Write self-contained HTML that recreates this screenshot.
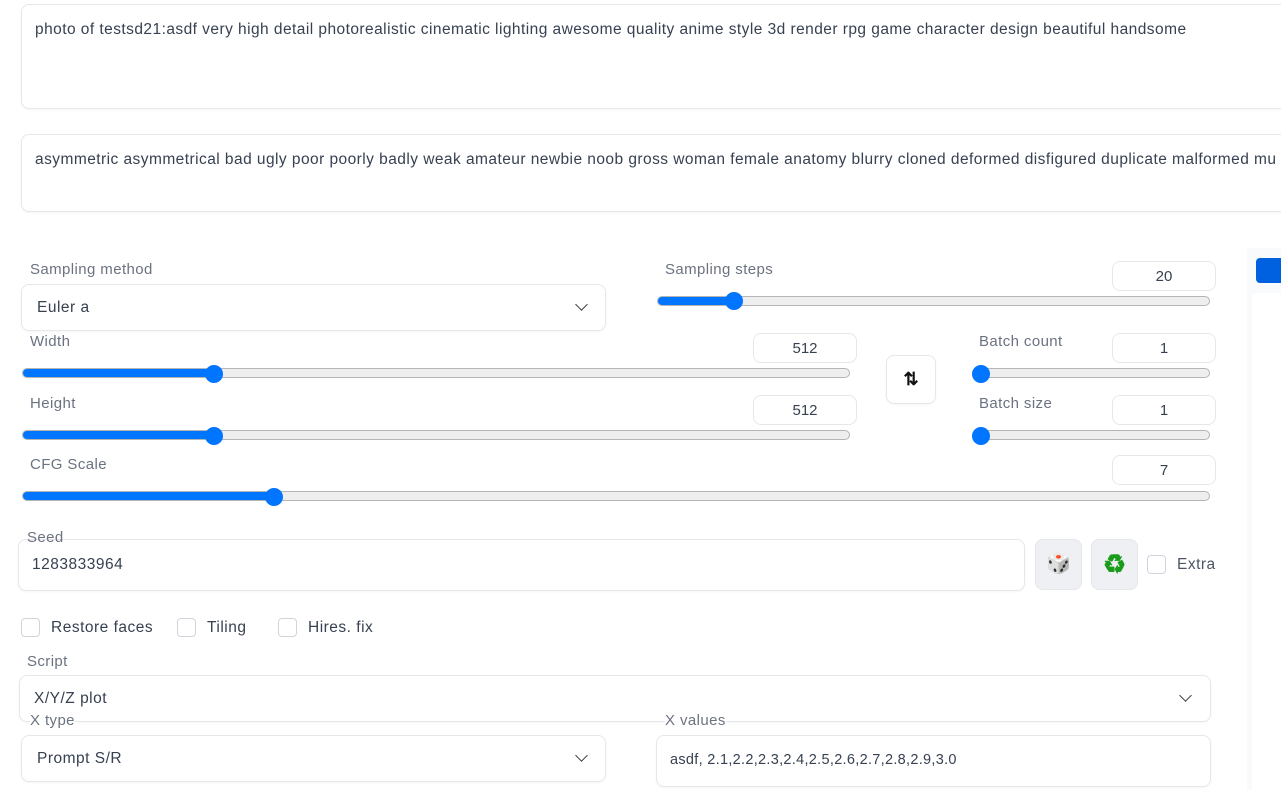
<!DOCTYPE html>
<html><head><style>
body{margin:0;width:1281px;height:789px;overflow:hidden;background:#fff;font-family:"Liberation Sans",sans-serif;position:relative;color:#374151}
.a{position:absolute}
.box{position:absolute;border:1px solid #e5e7eb;border-radius:8px;background:#fff;box-shadow:0 1px 2px rgba(0,0,0,.04)}
.lbl{position:absolute;font-size:15px;letter-spacing:0.4px;color:#6b7280;z-index:2;white-space:nowrap}
.num{position:absolute;border:1px solid #e5e7eb;border-radius:8px;width:102px;height:28px;text-align:center;line-height:30px;font-size:15px;color:#374151}
.trk{position:absolute;height:8px;border:1px solid #b5b5b5;border-radius:6px;background:#eee;overflow:hidden}
.trk i{position:absolute;left:0;top:0;bottom:0;background:#0075ff}
.th{position:absolute;width:18px;height:18px;border-radius:50%;background:#0075ff}
.cb{position:absolute;width:17px;height:17px;border:1px solid #d1d5db;border-radius:4px;background:#fff}
.t{position:absolute;font-size:15.5px;letter-spacing:0.5px;color:#374151;white-space:nowrap;z-index:2}
.chev{position:absolute;width:8px;height:8px;border-right:1.6px solid #444;border-bottom:1.6px solid #444;transform:rotate(45deg)}
</style></head><body>
<div class="box" style="left:21px;top:4px;width:1280px;height:103px"></div>
<div class="t" style="left:35px;top:21px;letter-spacing:0.45px">photo of testsd21:asdf very high detail photorealistic cinematic lighting awesome quality anime style 3d render rpg game character design beautiful handsome</div>
<div class="box" style="left:21px;top:134px;width:1280px;height:76px"></div>
<div class="t" style="left:35px;top:151px;letter-spacing:0.45px">asymmetric asymmetrical bad ugly poor poorly badly weak amateur newbie noob gross woman female anatomy blurry cloned deformed disfigured duplicate malformed mu</div>

<div class="a" style="left:1247px;top:248px;width:40px;height:541px;background:#f9fafb"></div>
<div class="a" style="left:1256px;top:258px;width:30px;height:25px;background:#0061e0;border-radius:4px"></div>
<div class="a" style="left:1252px;top:293px;width:40px;height:496px;background:#fff"></div>

<div class="lbl" style="left:30px;top:261px">Sampling method</div>
<div class="box" style="left:21px;top:284px;width:583px;height:45px"></div>
<div class="t" style="left:37px;top:299px">Euler a</div>
<div class="chev" style="left:577px;top:300px"></div>

<div class="lbl" style="left:665px;top:261px">Sampling steps</div>
<div class="num" style="left:1112px;top:261px">20</div>
<div class="trk" style="left:657px;top:296px;width:551px"><i style="width:78px"></i></div>
<div class="th" style="left:725px;top:292px"></div>

<div class="lbl" style="left:30px;top:333px">Width</div>
<div class="num" style="left:753px;top:333px">512</div>
<div class="trk" style="left:22px;top:368px;width:826px"><i style="width:192px"></i></div>
<div class="th" style="left:205px;top:365px"></div>

<div class="box" style="left:886px;top:355px;width:48px;height:47px;text-align:center;line-height:47px;font-size:18px;font-weight:bold;color:#111">⇅</div>

<div class="lbl" style="left:979px;top:333px">Batch count</div>
<div class="num" style="left:1112px;top:333px">1</div>
<div class="trk" style="left:972px;top:368px;width:236px"></div>
<div class="th" style="left:972px;top:365px"></div>

<div class="lbl" style="left:30px;top:395px">Height</div>
<div class="num" style="left:753px;top:395px">512</div>
<div class="trk" style="left:22px;top:430px;width:826px"><i style="width:192px"></i></div>
<div class="th" style="left:205px;top:427px"></div>

<div class="lbl" style="left:979px;top:395px">Batch size</div>
<div class="num" style="left:1112px;top:395px">1</div>
<div class="trk" style="left:972px;top:430px;width:236px"></div>
<div class="th" style="left:972px;top:427px"></div>

<div class="lbl" style="left:30px;top:456px">CFG Scale</div>
<div class="num" style="left:1112px;top:455px">7</div>
<div class="trk" style="left:22px;top:491px;width:1186px"><i style="width:252px"></i></div>
<div class="th" style="left:265px;top:488px"></div>

<div class="box" style="left:18px;top:539px;width:1005px;height:50px"></div>
<div class="lbl" style="left:27px;top:529px">Seed</div>
<div class="t" style="left:32px;top:556px">1283833964</div>
<div class="a" style="left:1035px;top:539px;width:45px;height:49px;background:#eef0f3;border-radius:8px;border:1px solid #e5e7eb;text-align:center;line-height:49px;font-size:20px">🎲</div>
<div class="a" style="left:1091px;top:539px;width:45px;height:49px;background:#eef0f3;border-radius:8px;border:1px solid #e5e7eb;text-align:center;line-height:49px;font-size:26px;font-weight:bold;color:#1a9c1a">♻</div>
<div class="cb" style="left:1147px;top:555px"></div>
<div class="t" style="left:1177px;top:556px;color:#4b5563">Extra</div>

<div class="cb" style="left:21px;top:618px"></div><div class="t" style="left:51px;top:619px">Restore faces</div>
<div class="cb" style="left:177px;top:618px"></div><div class="t" style="left:207px;top:619px">Tiling</div>
<div class="cb" style="left:278px;top:618px"></div><div class="t" style="left:308px;top:619px">Hires. fix</div>

<div class="lbl" style="left:27px;top:653px">Script</div>
<div class="box" style="left:19px;top:675px;width:1190px;height:45px"></div>
<div class="t" style="left:34px;top:690px">X/Y/Z plot</div>
<div class="chev" style="left:1181px;top:691px"></div>

<div class="lbl" style="left:30px;top:712px;background:#fff">X type</div>
<div class="box" style="left:21px;top:735px;width:583px;height:45px"></div>
<div class="t" style="left:37px;top:750px">Prompt S/R</div>
<div class="chev" style="left:577px;top:751px"></div>

<div class="lbl" style="left:665px;top:712px;background:#fff">X values</div>
<div class="box" style="left:656px;top:735px;width:553px;height:50px"></div>
<div class="t" style="left:670px;top:752px;font-size:14.5px;letter-spacing:0.3px">asdf, 2.1,2.2,2.3,2.4,2.5,2.6,2.7,2.8,2.9,3.0</div>
</body></html>
